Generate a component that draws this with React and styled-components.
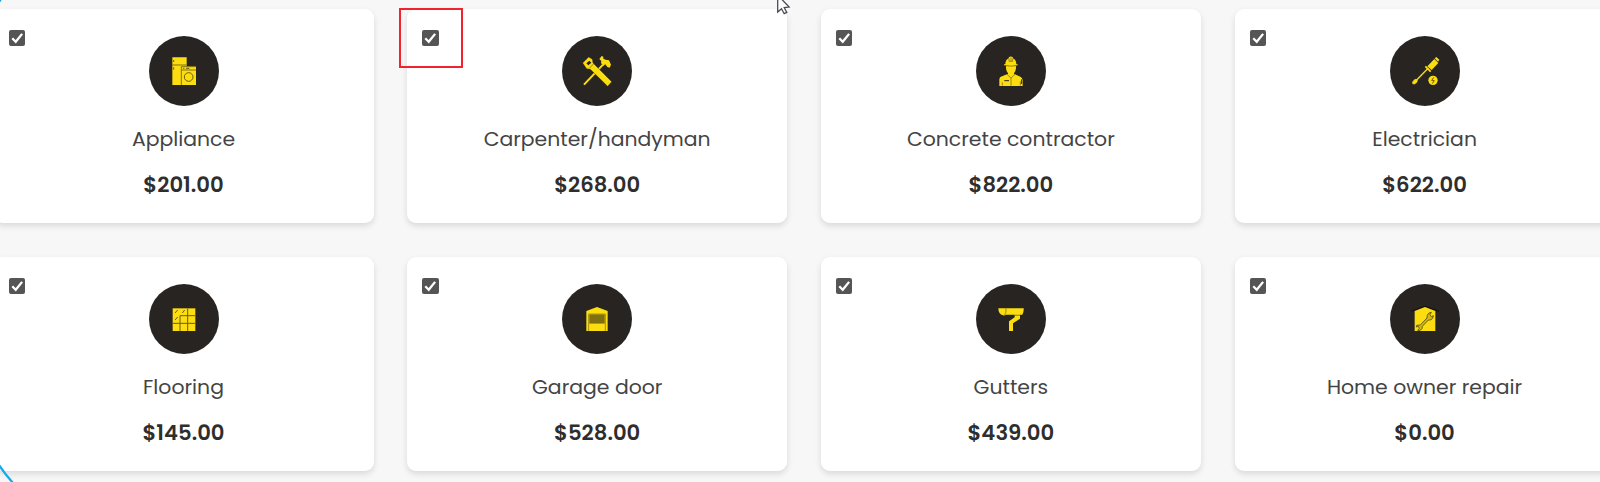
import React from "react";
import styled, { createGlobalStyle } from "styled-components";

const GlobalStyle = createGlobalStyle`
  *, *::before, *::after { box-sizing: border-box; }
  html, body { margin: 0; padding: 0; background: #f7f7f7; overflow: hidden; }
  body { font-family: Poppins, Inter, "Liberation Sans", sans-serif; color: #333; }
`;

const Page = styled.main`
  position: relative;
  width: 1600px;
  height: 482px;
  overflow: hidden;
  background: #f7f7f7;
`;

const CardGrid = styled.div`
  display: grid;
  grid-template-columns: repeat(4, 380px);
  grid-auto-rows: 214px;
  gap: 34px 33.7px;
  margin-left: -6.5px;
  padding-top: 9px;
`;

const Card = styled.article`
  position: relative;
  display: flex;
  flex-direction: column;
  align-items: center;
  padding-top: 27px;
  border-radius: 9px;
  background: #fff;
  box-shadow: 0 3px 6px rgba(0, 0, 0, 0.12);
`;

const Checkbox = styled.span`
  position: absolute;
  top: 20.5px;
  left: 15.2px;
  display: flex;
  width: 16.4px;
  height: 16.4px;
  border-radius: 2px;
  background: #555;

  svg { width: 100%; height: 100%; }
`;

const IconCircle = styled.div`
  width: 70px;
  height: 70px;
  border-radius: 50%;
  background: #282422;

  svg { display: block; width: 70px; height: 70px; }
`;

const Name = styled.h3`
  margin: 18px 0 0;
  font-size: 20.4px;
  line-height: 30px;
  font-weight: 400;
  color: #444;
  white-space: nowrap;
`;

const Price = styled.p`
  margin: 16px 0 0;
  font-size: 21.2px;
  line-height: 30px;
  font-weight: 600;
  color: #2e2e2e;
`;

const Highlight = styled.div`
  position: absolute;
  top: 8px;
  left: 399px;
  width: 64px;
  height: 60px;
  border: 2px solid #f2232c;
`;

const Cursor = styled.svg`
  position: absolute;
  top: -6px;
  left: 776px;
  width: 16px;
  height: 22px;
`;

const Curve = styled.svg`
  position: absolute;
  top: 0;
  left: 0;
  width: 20px;
  height: 482px;
  pointer-events: none;
`;

const Y = "#fbdd10";
const D = "#282422";
const L = "#6b5d13";

const Appliance = () => (
  <svg viewBox="17 17 210 210">
    <path d="M87 81h43v27h28v56H87z" fill={Y} />
    <path d="M87 104h43M114 109v55M114 109h44M115 119h43" stroke={L} strokeWidth="2.5" />
    <path d="M91 89v6M91 111v7M119 114h4M128 114h10" stroke={L} strokeWidth="3" />
    <circle cx="136" cy="140" r="13" fill="none" stroke={L} strokeWidth="3" />
  </svg>
);

const Carpenter = () => (
  <svg viewBox="19 17 210 210">
    <path d="M85 163 142 103" stroke={Y} strokeWidth="6" />
    <path d="m131 86 7-9 5 2v6l7 3 10 2 6 13-4 9-7-2-6-8-6 4-7-8 1-6z" fill={Y} />
    <path d="m81 98 18-18 11 7 2 11 56 56-12 14-52-51-11-2z" fill={Y} stroke={D} strokeWidth="1" />
    <path d="m92 99 9-8 6 6-9 8z" fill={D} />
    <path d="m101 114 12-13" stroke={L} strokeWidth="2" />
  </svg>
);

const Concrete = () => (
  <svg viewBox="18 17 210 210">
    <path d="M88 167v-20q0-7 8-9l15-6h24l16 7q7 3 7 11v17z" fill={Y} />
    <path d="M108 106h30v8q-1 10-6 15v6l-9 8-9-8v-6q-5-5-6-15z" fill={Y} />
    <path d="M102 105v-3h4q0-13 10-18l1-4q6-3 11 0l1 4q10 5 10 18h4v3q-20 4-41 0z" fill={Y} />
    <path d="M107 106q16 3 32 0M123 81v12M117 84v9h11v-9M112 133l11 10 11-10M123 143v23M97 156v10M151 153v13" fill="none" stroke={L} strokeWidth="2" />
    <path d="M103 151h14M155 147v14" stroke={D} strokeWidth="3" />
  </svg>
);

const Electrician = () => (
  <svg viewBox="17 17 210 210">
    <path d="M91 155 132 113" stroke={Y} strokeWidth="4" />
    <path d="m85 154 7-7 7 1-1 7-7 6-6-1z" fill={Y} stroke={Y} strokeWidth="2" />
    <path d="m129 108 21-22 12 12-20 21z" fill={Y} />
    <path d="m151 84 5-4 9 8-4 6z" fill={Y} />
    <path d="m123 108 16 16" stroke={Y} strokeWidth="5" />
    <path d="m151 85 10 10" stroke={L} strokeWidth="1.5" />
    <circle cx="146" cy="150" r="14" fill={Y} />
    <path d="m148 141-6 10h8l-6 9" fill="none" stroke={L} strokeWidth="3" />
  </svg>
);

const Flooring = () => (
  <svg viewBox="17 17 210 210">
    <path d="M88 90h68v68H88z" fill={Y} />
    <path d="M110 112v46M133 90v68M110 112h46M88 135h68" fill="none" stroke={L} strokeWidth="3" />
    <path d="m95 104 8-9M117 104l7-9M95 125l8-9" stroke={L} strokeWidth="3" />
  </svg>
);

const Garage = () => (
  <svg viewBox="19 17 210 210">
    <path d="M92 158V98l32-12 32 12v60z" fill={Y} />
    <path d="M99 158v-51h50v51" fill="none" stroke="#a59012" strokeWidth="3" />
    <path d="M101 108h46v28h-46z" fill="#8b7911" />
    <path d="M101 113h46M101 119h46M101 125h46M101 131h46" stroke={L} strokeWidth="2" />
  </svg>
);

const Gutters = () => (
  <svg viewBox="18 17 210 210">
    <path d="M85 90h76q1 11-4 19h-49q-3 3-9 2-14-3-14-21z" fill={Y} />
    <path d="M108 90q1 14-4 20" fill="none" stroke={L} strokeWidth="2" />
    <path d="M134 108h16v13l-21 14v23h-12v-29l17-12z" fill={Y} />
    <path d="M134 111h16" stroke={L} strokeWidth="2" />
  </svg>
);

const HomeRepair = () => (
  <svg viewBox="17 17 210 210">
    <path d="m81 99 41-15 42 15" fill="none" stroke="#171513" strokeWidth="4" />
    <path d="M91 158V98l31-12 31 12v60z" fill={Y} />
    <path
      d="m98 140 6 1 5-2 19-20q-1-10 6-15l7-2-4 7 4 6 6-3q0 9-7 12-4 2-8 1l-18 19q1 7-5 11-5 3-9 1l5-6-3-6-6 2q0-4 2-6z"
      fill="#d2b812"
      stroke={L}
      strokeWidth="3"
      strokeLinejoin="round"
    />
  </svg>
);

const services = [
  { name: "Appliance", price: "$201.00", icon: Appliance },
  { name: "Carpenter/handyman", price: "$268.00", icon: Carpenter },
  { name: "Concrete contractor", price: "$822.00", icon: Concrete },
  { name: "Electrician", price: "$622.00", icon: Electrician },
  { name: "Flooring", price: "$145.00", icon: Flooring },
  { name: "Garage door", price: "$528.00", icon: Garage },
  { name: "Gutters", price: "$439.00", icon: Gutters },
  { name: "Home owner repair", price: "$0.00", icon: HomeRepair },
];

function ServiceCard({ service }) {
  const Icon = service.icon;
  return (
    <Card>
      <Checkbox role="checkbox" aria-checked="true" aria-label={service.name}>
        <svg viewBox="0 0 17 17">
          <path d="m3.4 8.6 3.6 3.6 6.6-8.2" fill="none" stroke="#fff" strokeWidth="2.4" />
        </svg>
      </Checkbox>
      <IconCircle><Icon /></IconCircle>
      <Name>{service.name}</Name>
      <Price>{service.price}</Price>
    </Card>
  );
}

export default function App() {
  return (
    <>
      <GlobalStyle />
      <Page>
        <CardGrid>
          {services.map((s) => <ServiceCard key={s.name} service={s} />)}
        </CardGrid>
        <Highlight />
        <Curve viewBox="0 0 20 482">
          <path d="M-1 465Q5 474 13 483M-1 2L1 -1" fill="none" stroke="#18a8ea" strokeWidth="2.2" />
        </Curve>
        <Cursor viewBox="0 0 16 22">
          <path d="M1.7 1v17l3.8-3.3 2.7 5 2.6-1.3-2.6-4.8 4.9-.5z" fill="#fff" stroke="#4b4b55" strokeWidth="1.3" />
        </Cursor>
      </Page>
    </>
  );
}
